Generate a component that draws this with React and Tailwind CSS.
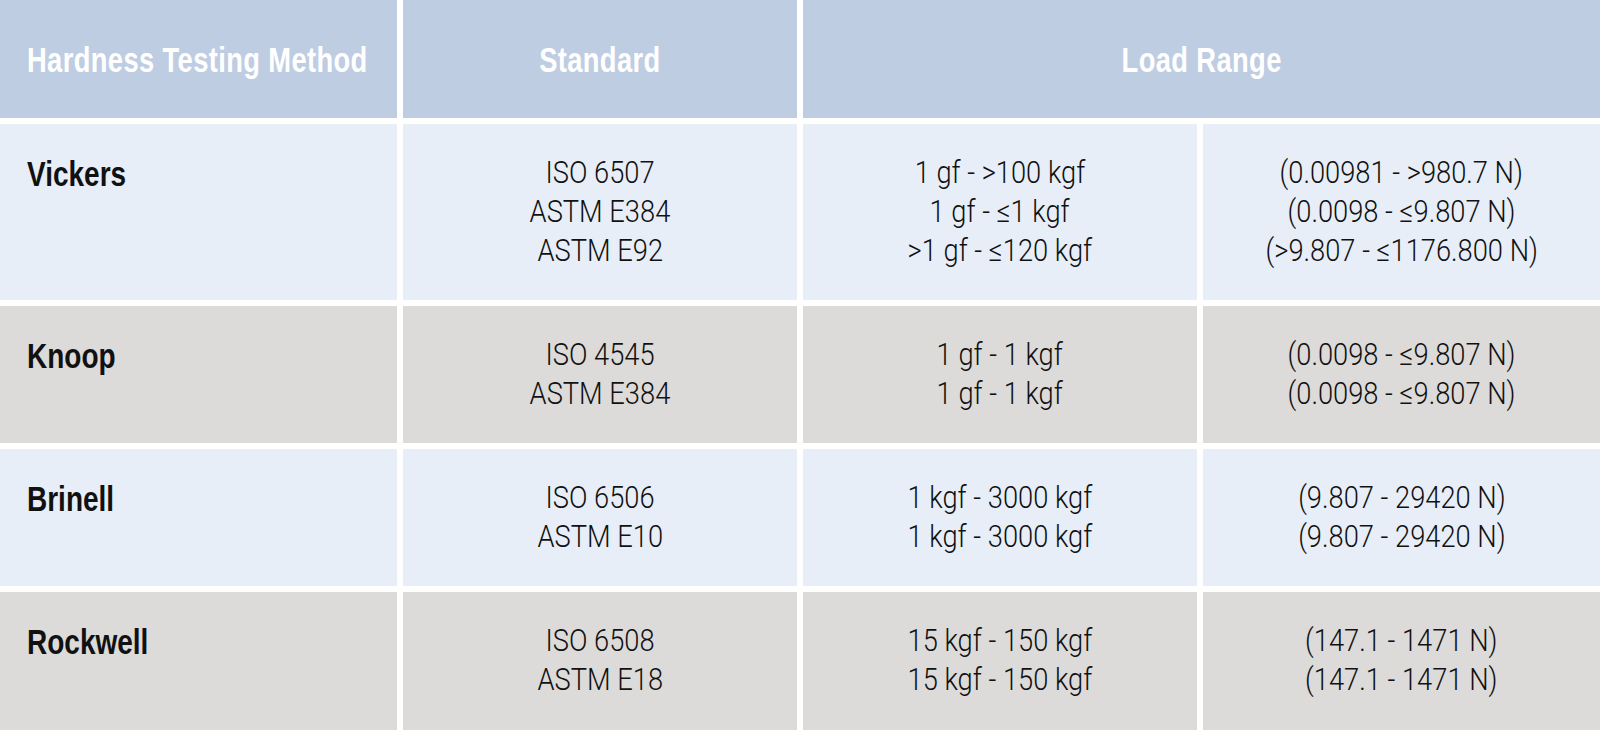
const ROWS = [
  {
    method: 'Vickers',
    tone: 'light',
    standards: ['ISO 6507', 'ASTM E384', 'ASTM E92'],
    loads: ['1 gf - >100 kgf', '1 gf - ≤1 kgf', '>1 gf - ≤120 kgf'],
    newtons: ['(0.00981 - >980.7 N)', '(0.0098 - ≤9.807 N)', '(>9.807 - ≤1176.800 N)'],
  },
  {
    method: 'Knoop',
    tone: 'gray',
    standards: ['ISO 4545', 'ASTM E384'],
    loads: ['1 gf - 1 kgf', '1 gf - 1 kgf'],
    newtons: ['(0.0098 - ≤9.807 N)', '(0.0098 - ≤9.807 N)'],
  },
  {
    method: 'Brinell',
    tone: 'light',
    standards: ['ISO 6506', 'ASTM E10'],
    loads: ['1 kgf - 3000 kgf', '1 kgf - 3000 kgf'],
    newtons: ['(9.807 - 29420 N)', '(9.807 - 29420 N)'],
  },
  {
    method: 'Rockwell',
    tone: 'gray',
    standards: ['ISO 6508', 'ASTM E18'],
    loads: ['15 kgf - 150 kgf', '15 kgf - 150 kgf'],
    newtons: ['(147.1 - 1471 N)', '(147.1 - 1471 N)'],
  },
];

// condensed face is not installed, so the text is squeezed horizontally
const FONT = "font-['Liberation_Sans','Arial',sans-serif]";

function Lines({ items }) {
  return (
    <div className="flex flex-col items-center pt-[29px] font-['Roboto','Liberation_Sans',sans-serif] text-[31px] font-light leading-[39px] text-[#111]">
      {items.map((t, i) => (
        <span key={i} className="inline-block scale-x-[0.88] whitespace-nowrap">{t}</span>
      ))}
    </div>
  );
}

function HeadText({ children, left }) {
  return (
    <span className={`inline-block whitespace-nowrap text-[35px] font-bold tracking-[0.5px] text-white scale-x-[0.78] ${left ? 'origin-left' : ''}`}>
      {children}
    </span>
  );
}

export default function App() {
  return (
    <div className={`h-[730px] w-[1600px] overflow-hidden bg-white ${FONT}`}>
      <div className="grid grid-cols-[397px_394px_394px_1fr] grid-rows-[118px_176px_137px_137px_138px] gap-[6px]">
        {/* Header */}
        <div className="flex items-center bg-[#bfcde3] pl-[27px] pt-[3px]">
          <HeadText left>Hardness Testing Method</HeadText>
        </div>
        <div className="flex items-center justify-center bg-[#bfcde3] pt-[3px]">
          <HeadText>Standard</HeadText>
        </div>
        <div className="col-span-2 flex items-center justify-center bg-[#bfcde3] pt-[3px]">
          <HeadText>Load Range</HeadText>
        </div>

        {ROWS.map(row => {
          const bg = row.tone === 'light' ? 'bg-[#e7eef8]' : 'bg-[#dcdbd9]';
          return [
            <div key={row.method + 'm'} className={`${bg} pl-[27px] pt-[30px] text-[35px] font-bold leading-[39px] text-[#111]`}>
              <span className="inline-block origin-left scale-x-[0.8] whitespace-nowrap">{row.method}</span>
            </div>,
            <div key={row.method + 's'} className={bg}><Lines items={row.standards} /></div>,
            <div key={row.method + 'l'} className={bg}><Lines items={row.loads} /></div>,
            <div key={row.method + 'n'} className={bg}><Lines items={row.newtons} /></div>,
          ];
        })}
      </div>
    </div>
  );
}
